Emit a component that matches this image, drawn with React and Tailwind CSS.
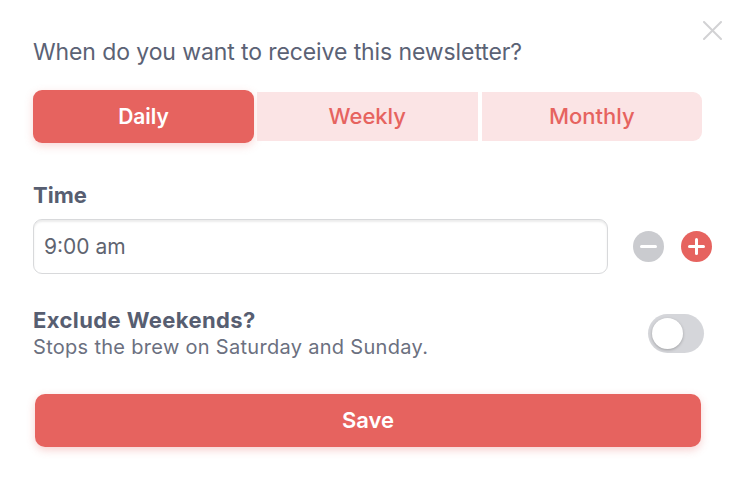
import React from "react";

export default function App() {
  return (
    <div className="relative w-[736px] h-[477px] overflow-hidden bg-white pl-[33px] pr-[34px] pt-[38px] font-['Inter',sans-serif] text-[#5b6275]">
      <button className="absolute top-[21px] right-[14px] w-[19px] h-[19px]" aria-label="Close">
        <svg viewBox="0 0 19 19" className="w-[19px] h-[19px]">
          <path d="M1 1 L18 18 M18 1 L1 18" stroke="#d2d2d4" strokeWidth="2" strokeLinecap="round" />
        </svg>
      </button>

      <h1 className="text-[23px] leading-[28px] font-normal tracking-[-0.1px]">
        When do you want to receive this newsletter?
      </h1>

      <div className="mt-[24px] flex items-center gap-[3px]">
        <div className="w-[221px] shrink-0 h-[53px] rounded-[9px] bg-[#e6635f] text-white text-[21px] font-semibold flex items-center justify-center shadow-[0_3px_8px_rgba(230,99,95,0.25)]">
          Daily
        </div>
        <div className="flex-1 h-[49px] bg-[#fbe4e5] text-[#e6635f] text-[22px] font-medium flex items-center justify-center">
          Weekly
        </div>
        <div className="flex-1 ml-[1px] h-[49px] bg-[#fbe4e5] rounded-r-[9px] text-[#e6635f] text-[22px] font-medium flex items-center justify-center">
          Monthly
        </div>
      </div>

      <div className="mt-[38px] text-[22px] leading-[28px] font-bold text-[#575e71]">Time</div>

      <div className="mt-[10px] flex items-center">
        <div className="w-[575px] shrink-0 h-[55px] rounded-[9px] border border-[#d8d9db] shadow-[inset_0_2px_2px_rgba(0,0,0,0.08)] flex items-center px-[10px] text-[21px] text-[#5f6470]">
          9:00 am
        </div>
        <div className="ml-[25px] shrink-0 w-[31px] h-[31px] rounded-full bg-[#cacbcf] flex items-center justify-center">
          <div className="w-[17px] h-[3px] rounded bg-white" />
        </div>
        <div className="ml-[17px] shrink-0 w-[31px] h-[31px] rounded-full bg-[#e6635f] relative flex items-center justify-center">
          <div className="w-[17px] h-[3px] rounded bg-white" />
          <div className="absolute w-[3px] h-[17px] rounded bg-white" />
        </div>
      </div>

      <div className="mt-[32px] flex items-start justify-between">
        <div>
          <div className="text-[22px] leading-[28px] font-bold tracking-[0.4px] text-[#575e71]">Exclude Weekends?</div>
          <div className="text-[20px] leading-[24px] tracking-[0.3px] text-[#6b7080] mt-[1px]">Stops the brew on Saturday and Sunday.</div>
        </div>
        <div className="mt-[8px] mr-[-2px] w-[56px] h-[39px] rounded-full bg-[#d5d6da] p-[4px] flex items-center">
          <div className="w-[31px] h-[31px] rounded-full bg-white shadow-[0_1px_3px_rgba(0,0,0,0.25)]" />
        </div>
      </div>

      <button className="mt-[35px] ml-[2px] w-[666px] h-[53px] rounded-[10px] bg-[#e6635f] text-white text-[22px] font-semibold flex items-center justify-center shadow-[0_3px_8px_rgba(230,99,95,0.3)]">
        Save
      </button>
    </div>
  );
}
